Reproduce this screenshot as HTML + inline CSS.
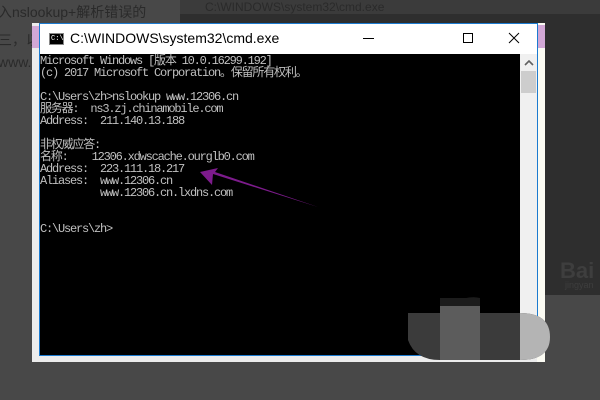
<!DOCTYPE html>
<html><head><meta charset="utf-8"><style>
*{margin:0;padding:0;box-sizing:border-box}
body{width:600px;height:400px;overflow:hidden;background:#484848;position:relative;font-family:"Liberation Sans","Noto Sans CJK SC",sans-serif}
.a{position:absolute}
.t{position:absolute;left:40px;color:#c0c0c0;font-family:"Liberation Mono","Noto Sans CJK SC",monospace;font-size:12px;line-height:12px;letter-spacing:-1.2px;white-space:pre}
.bg{color:#2a2a2a;font-size:14px;white-space:nowrap}
</style></head><body>
<div class="a bg" style="left:-2px;top:2px">入nslookup+解析错误的</div>
<div class="a bg" style="left:-2px;top:30px">三，以</div>
<div class="a bg" style="left:-2px;top:54px">www.1</div>
<div class="a" style="left:180px;top:0;width:420px;height:14px;background:#3b3b3b"></div>
<div class="a" style="left:205px;top:0;color:#2a2a2a;font-size:12px">C:\WINDOWS\system32\cmd.exe</div>
<div class="a" style="left:180px;top:14px;width:420px;height:10px;background:#2e2e2e"></div>
<div class="a" style="left:545px;top:14px;width:55px;height:281px;background:#2e2e2e"></div>
<div class="a" style="left:560px;top:258px;color:#3e3e3e;font-size:22px;font-weight:bold">Bai</div>
<div class="a" style="left:565px;top:280px;color:#3e3e3e;font-size:9px">jingyan</div>
<!-- frame -->
<div class="a" style="left:32px;top:23px;width:513px;height:339px;background:#ececec"></div>
<div class="a" style="left:537px;top:23px;width:8px;height:339px;background:#fbfbf3"></div>
<div class="a" style="left:32px;top:26px;width:7px;height:22px;background:#d2a8d6"></div>
<div class="a" style="left:538px;top:25px;width:7px;height:23px;background:#d2a8d6"></div>
<div class="a" style="left:39px;top:23px;width:499px;height:333px;border:1px solid #1c7bd0;background:#fff"></div>
<!-- title -->
<div class="a" style="left:49px;top:33px;width:15px;height:12px;background:#000;border:1px solid #888"><span style="position:absolute;left:1px;top:1px;color:#fff;font-size:7px;line-height:8px;font-family:'Liberation Mono',monospace">C:\</span></div>
<div class="a" style="left:70px;top:30px;font-size:14px;color:#000">C:\WINDOWS\system32\cmd.exe</div>
<div class="a" style="left:363px;top:38px;width:11px;height:1px;background:#000"></div>
<div class="a" style="left:463px;top:33px;width:10px;height:10px;border:1px solid #000"></div>
<svg class="a" style="left:508px;top:32px" width="12" height="12"><path d="M1 1L11 11M11 1L1 11" stroke="#000" stroke-width="1"/></svg>
<!-- console -->
<div class="a" style="left:40px;top:54px;width:480px;height:301px;background:#000"></div>
<div class="a" style="left:520px;top:54px;width:17px;height:301px;background:#f0f0f0"></div>
<svg class="a" style="left:524px;top:60px" width="10" height="6"><path d="M1 5L5 1L9 5" stroke="#606060" stroke-width="1.6" fill="none"/></svg>
<div class="a" style="left:521px;top:71px;width:15px;height:22px;background:#cdcdcd"></div>
<div class="t" style="top:55px">Microsoft Windows [版本 10.0.16299.192]</div>
<div class="t" style="top:67px">(c) 2017 Microsoft Corporation。保留所有权利。</div>
<div class="t" style="top:91px">C:\Users\zh>nslookup www.12306.cn</div>
<div class="t" style="top:103px">服务器:  ns3.zj.chinamobile.com</div>
<div class="t" style="top:115px">Address:  211.140.13.188</div>
<div class="t" style="top:139px">非权威应答:</div>
<div class="t" style="top:151px">名称:    12306.xdwscache.ourglb0.com</div>
<div class="t" style="top:163px">Address:  223.111.18.217</div>
<div class="t" style="top:175px">Aliases:  www.12306.cn</div>
<div class="t" style="top:187px">          www.12306.cn.lxdns.com</div>
<div class="t" style="top:223px">C:\Users\zh></div>
<svg class="a" style="left:0;top:0" width="600" height="400">
<path d="M318 207L213 174L212 185L200 172L218 168L215 172Z" fill="#7d1b8c"/>
<path d="M408 313L440 313L440 306Q460 296 480 298L480 313L520 313Q550 313 550 337Q550 360 520 360L440 360Q415 360 408 340Z" fill="#3b3b3b"/>
<rect x="440" y="306" width="40" height="54" fill="#5c5c5c"/>
<rect x="440" y="298" width="40" height="8" fill="#1c1c1c"/>
<path d="M520 313Q550 313 550 337Q550 360 520 360Z" fill="#b4b4b4"/>
</svg>
</body></html>
